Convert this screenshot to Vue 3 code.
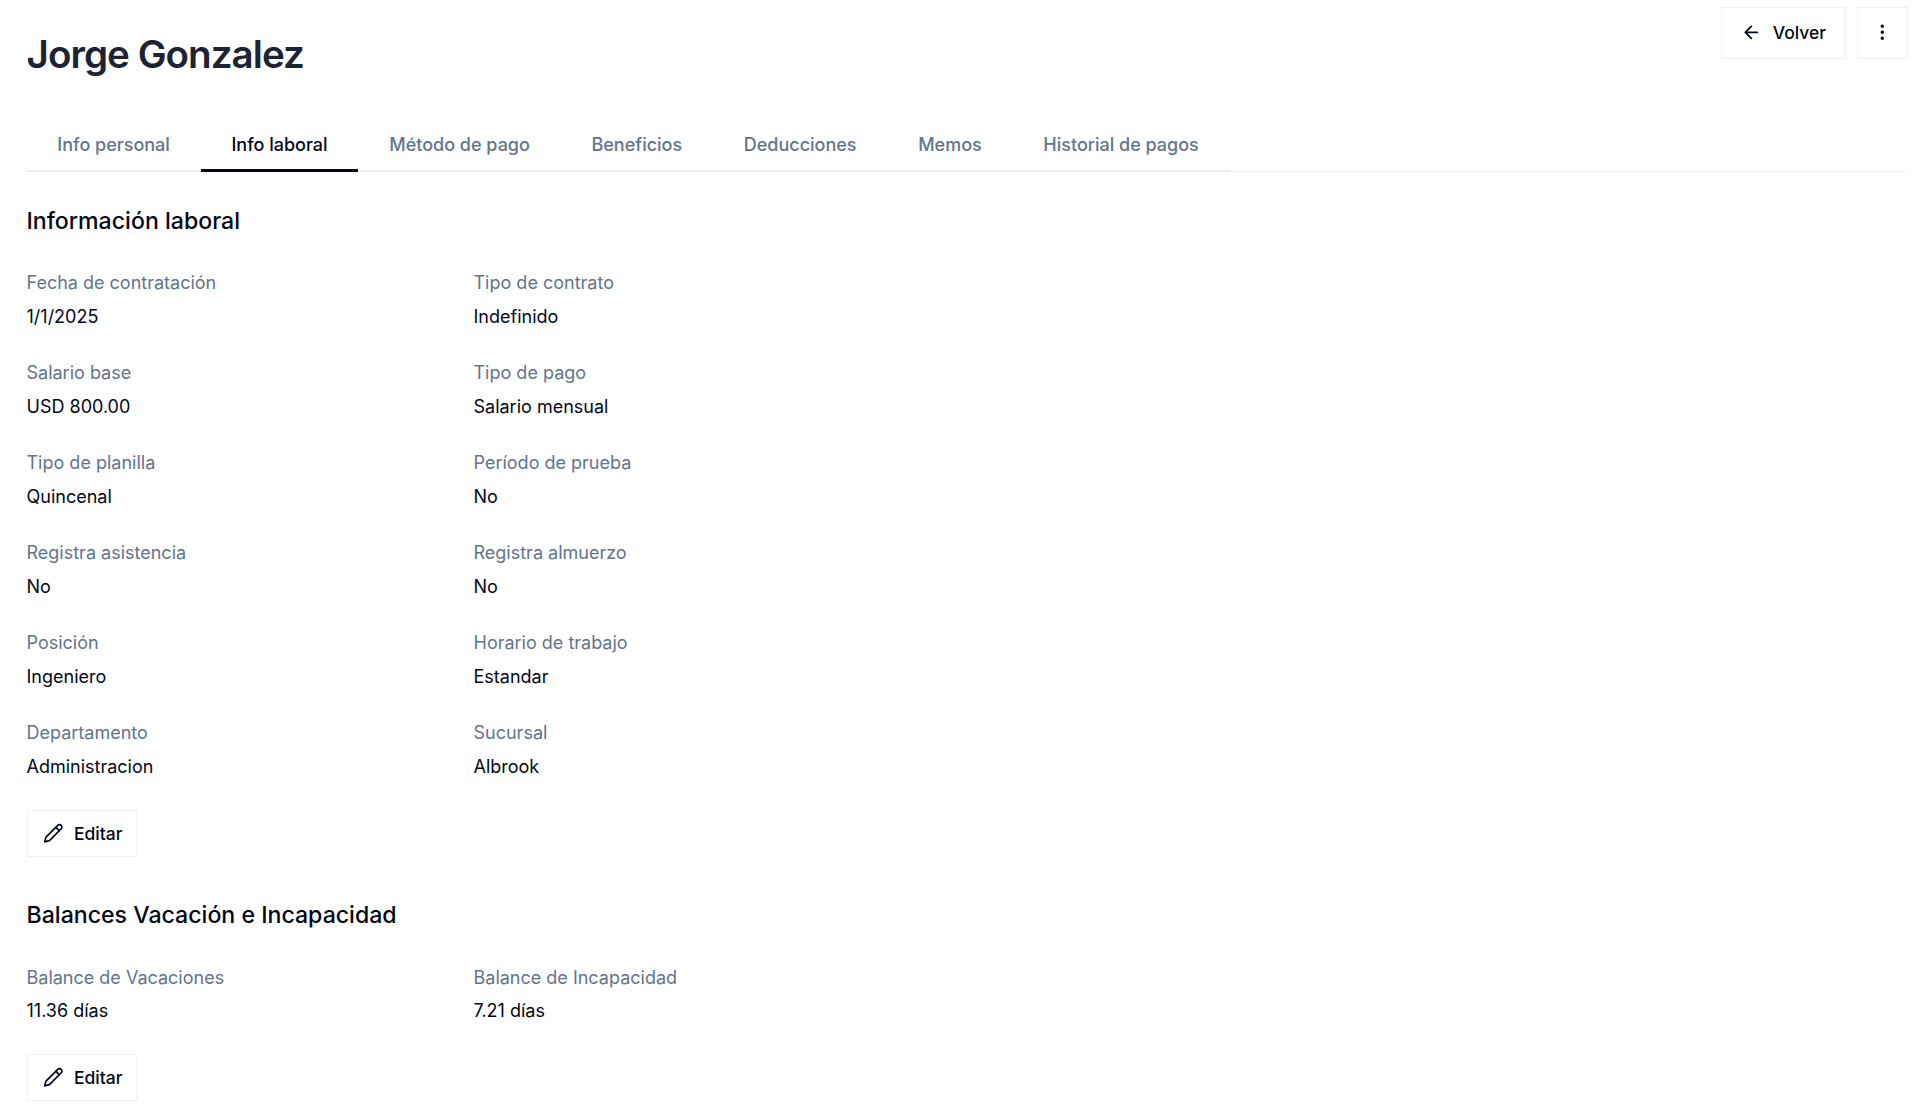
<script setup>
const tabs = ['Info personal', 'Info laboral', 'Método de pago', 'Beneficios', 'Deducciones', 'Memos', 'Historial de pagos']
const info = [
  ['Fecha de contratación', '1/1/2025'], ['Tipo de contrato', 'Indefinido'],
  ['Salario base', 'USD 800.00'], ['Tipo de pago', 'Salario mensual'],
  ['Tipo de planilla', 'Quincenal'], ['Período de prueba', 'No'],
  ['Registra asistencia', 'No'], ['Registra almuerzo', 'No'],
  ['Posición', 'Ingeniero'], ['Horario de trabajo', 'Estandar'],
  ['Departamento', 'Administracion'], ['Sucursal', 'Albrook'],
]
const balances = [['Balance de Vacaciones', '11.36 días'], ['Balance de Incapacidad', '7.21 días']]
</script>

<template>
  <div class="page">
    <header class="head">
      <h1 class="title">Jorge Gonzalez</h1>
      <div class="actions">
        <button class="btn back">
          <svg class="ico" viewBox="0 0 24 24"><path d="M19 12H5M12 19l-7-7 7-7" /></svg>
          Volver
        </button>
        <button class="btn more">
          <svg class="ico" viewBox="0 0 24 24"><circle cx="12" cy="5" r="1" /><circle cx="12" cy="12" r="1" /><circle cx="12" cy="19" r="1" /></svg>
        </button>
      </div>
    </header>

    <div class="tabbar">
      <nav class="tabs">
        <span v-for="t in tabs" :key="t" class="tab" :class="{ active: t === 'Info laboral' }">{{ t }}</span>
      </nav>
    </div>

    <section class="sec first">
      <h2 class="sub">Información laboral</h2>
      <div class="grid">
        <div v-for="f in info" :key="f[0]" class="field">
          <div class="label">{{ f[0] }}</div>
          <div class="value">{{ f[1] }}</div>
        </div>
      </div>
      <button class="btn edit">
        <svg class="ico" viewBox="0 0 24 24"><path d="M17 3a2.85 2.83 0 1 1 4 4L7.5 20.5 2 22l1.5-5.5Z" /><path d="m15 5 4 4" /></svg>
        Editar
      </button>
    </section>

    <section class="sec second">
      <h2 class="sub">Balances Vacación e Incapacidad</h2>
      <div class="grid">
        <div v-for="f in balances" :key="f[0]" class="field">
          <div class="label">{{ f[0] }}</div>
          <div class="value">{{ f[1] }}</div>
        </div>
      </div>
      <button class="btn edit">
        <svg class="ico" viewBox="0 0 24 24"><path d="M17 3a2.85 2.83 0 1 1 4 4L7.5 20.5 2 22l1.5-5.5Z" /><path d="m15 5 4 4" /></svg>
        Editar
      </button>
    </section>
  </div>
</template>

<style scoped>
.page {
  padding: 7px 12px 0 26.5px;
  font-family: Inter, "Liberation Sans", sans-serif;
  color: #020817;
  height: 1115px;
  box-sizing: border-box;
  overflow: hidden;
}
.head { display: flex; justify-content: space-between; align-items: flex-start; height: 114px; }
.title { margin: 24px 0 0; font-size: 38.57px; line-height: 46px; font-weight: 600; letter-spacing: -0.96px; color: #1b2335; }
.actions { display: flex; gap: 10.3px; }
.btn {
  display: inline-flex; align-items: center; justify-content: flex-start;
  height: 51.5px; background: #fff; border: 1px solid #f0f1f5; color: #020817;
  font: 500 17.5px Inter, "Liberation Sans", sans-serif; padding: 0; box-sizing: border-box;
}
.back { width: 125.5px; padding-left: 19.5px; gap: 11px; }
.more { width: 51.5px; justify-content: center; }
.edit { width: 110px; height: 47px; padding-left: 15.4px; gap: 10.5px; }
.ico { width: 20.57px; height: 20.57px; fill: none; stroke: currentColor; stroke-width: 2; stroke-linecap: round; stroke-linejoin: round; }
.tabbar { border-bottom: 1px solid #f1f3f6; }
.tabs { display: inline-flex; border-bottom: 2px solid #e9ecf1; margin-bottom: -1px; }
.tab {
  padding: 0 30.8px; height: 51px; line-height: 47px; font-size: 18px; font-weight: 500; color: #64748b;
  border-bottom: 3px solid transparent; margin-bottom: -2px; box-sizing: border-box;
}
.tab.active { color: #020817; border-bottom-color: #020817; }
.sec.first { margin-top: 33.5px; }
.sec.second { margin-top: 43.5px; }
.sub { margin: 0 0 34.5px; font-size: 23.14px; line-height: 30px; font-weight: 500; color: #020817; }
.grid { display: grid; grid-template-columns: 447px 447px; row-gap: 24px; margin-bottom: 23.5px; }
.field { height: 66px; }
.label { font-size: 18px; line-height: 26px; color: #64748b; margin-bottom: 7.5px; }
.value { font-size: 18px; line-height: 26px; color: #020817; }
</style>
